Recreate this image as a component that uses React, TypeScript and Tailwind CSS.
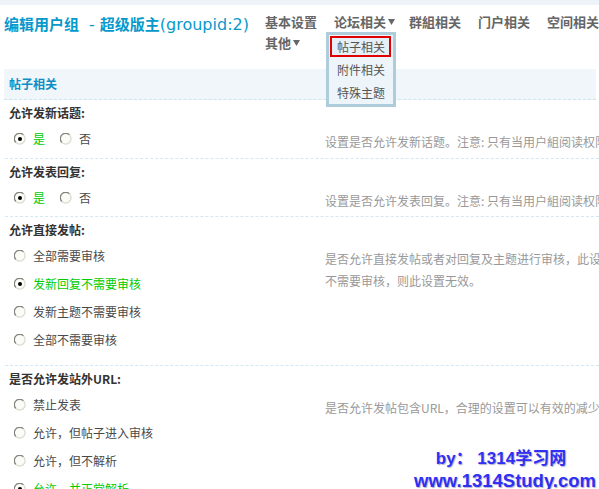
const font = "font-['Noto_Sans_CJK_SC','Noto_Sans',sans-serif]";

function Radio({ checked }: { checked?: boolean }) {
  return (
    <svg width="12" height="12" viewBox="0 0 12 12" className="shrink-0">
      <circle cx="6" cy="6" r="5.4" fill="#fbfbf7" />
      <path d="M1.9 9.5A5 5 0 0 1 9.5 1.9" stroke="#85827b" fill="none" strokeWidth="1.3" />
      <path d="M9.5 1.9A5 5 0 0 1 1.9 9.5" stroke="#dddad1" fill="none" strokeWidth="1.3" />
      {checked && <circle cx="6" cy="6" r="2" fill="#000" />}
    </svg>
  );
}

function Option({ label, checked }: { label: string; checked?: boolean }) {
  return (
    <div className="flex h-[28px] items-center">
      <Radio checked={checked} />
      <span className={checked ? "ml-[7px] text-[#00cc00]" : "ml-[7px] text-[#4a4a4a]"}>{label}</span>
    </div>
  );
}

function Caret() {
  return (
    <svg width="7" height="6" viewBox="0 0 7 6" className="ml-[2px] shrink-0">
      <path d="M0 0H7L3.5 6Z" fill="#666" />
    </svg>
  );
}

interface RowProps {
  title: string;
  pb: string;
  options: React.ReactNode;
  desc: React.ReactNode;
}

function Row({ title, pb, options, desc }: RowProps) {
  return (
    <div className={`ml-[5px] border-b border-dashed border-[#d3e8f6] pt-[3px] ${pb}`}>
      <div className="pl-[4px] text-[12px] font-bold leading-[20px] text-[#333]">{title}</div>
      <div className="mt-[2px] flex">
        <div className="w-[320px] shrink-0 pl-[9px] text-[12px]">{options}</div>
        <div className="whitespace-nowrap pt-[6px] text-[12px] leading-[22px] text-[#999]">{desc}</div>
      </div>
    </div>
  );
}

export default function App() {
  return (
    <div className={`relative h-[489px] w-[599px] overflow-hidden bg-white ${font}`}>
      <div className="h-[5px] bg-[#eef3f9]" />

      <div className="flex h-[64px]">
        <div className="flex w-[265px] shrink-0 items-baseline whitespace-nowrap pl-[4px] pt-[9px] text-[15px] font-bold leading-[20px] text-[#0899cc]">
          <span>编辑用户组</span>
          <span className="ml-[10px] mr-[5px] font-['DejaVu_Sans',sans-serif] font-normal text-[16px]">-</span>
          <span>超级版主</span>
          <span className="font-['DejaVu_Sans',sans-serif] font-normal text-[16px]">(groupid:2)</span>
        </div>
        <div className="relative pt-[6px] text-[13px] font-bold leading-[21px] text-[#666]">
          <div className="flex items-center whitespace-nowrap">
            <span>基本设置</span>
            <span className="ml-[17px]">论坛相关</span>
            <Caret />
            <span className="ml-[14px]">群組相关</span>
            <span className="ml-[17px]">门户相关</span>
            <span className="ml-[17px]">空间相关</span>
          </div>
          <div className="flex items-center">
            <span>其他</span>
            <Caret />
          </div>

          <div className="absolute left-[61px] top-[27px] z-10 h-[75px] w-[70px] border-[3px] border-[#aecdda] bg-[#eef5fa] text-[12px] font-normal text-[#555]">
            <div className="ml-[1px] mt-[1px] h-[21px] w-[61px] border-2 border-[#e00000] bg-[#e6eff6] pl-[5px] leading-[17px]">
              帖子相关
            </div>
            <div className="mt-[1px] h-[24px] pl-[8px] leading-[24px]">附件相关</div>
            <div className="h-[22px] pl-[8px] leading-[22px]">特殊主题</div>
          </div>
        </div>
      </div>

      <div className="ml-[4px] h-[31px] w-[592px] border-b border-dashed border-[#c9e4f5] bg-[#f1f6fb] pl-[5px] text-[12px] font-bold leading-[30px] text-[#0e8fc2]">
        帖子相关
      </div>

      <Row
        title="允许发新话题:"
        pb="pb-[5px]"
        options={
          <div className="flex">
            <Option label="是" checked />
            <div className="ml-[15px]">
              <Option label="否" />
            </div>
          </div>
        }
        desc="设置是否允许发新话题。注意: 只有当用户組阅读权限高于 0 时才能发新话题"
      />
      <Row
        title="允许发表回复:"
        pb="pb-[4px]"
        options={
          <div className="flex">
            <Option label="是" checked />
            <div className="ml-[15px]">
              <Option label="否" />
            </div>
          </div>
        }
        desc="设置是否允许发表回复。注意: 只有当用户組阅读权限高于 0 时才能发表回复"
      />
      <Row
        title="允许直接发帖:"
        pb="pb-[11px]"
        options={
          <>
            <Option label="全部需要审核" />
            <Option label="发新回复不需要审核" checked />
            <Option label="发新主题不需要审核" />
            <Option label="全部不需要审核" />
          </>
        }
        desc={
          <>
            <div>是否允许直接发帖或者对回复及主题进行审核，此设置只对需要审核的版块有效，如果版块</div>
            <div>不需要审核，则此设置无效。</div>
          </>
        }
      />
      <Row
        title="是否允许发站外URL:"
        pb="pb-[4px]"
        options={
          <>
            <Option label="禁止发表" />
            <Option label="允许，但帖子进入审核" />
            <Option label="允许，但不解析" />
            <Option label="允许，并正常解析" checked />
          </>
        }
        desc="是否允许发帖包含URL，合理的设置可以有效的减少广告的发布"
      />

      <div className="absolute bottom-[-3px] right-[3px] text-center font-['Liberation_Sans','Noto_Sans_CJK_SC',sans-serif] font-bold text-[#3030f4] [text-shadow:1px_1px_1px_#b4b4cc]">
        <div className="pr-[8px] text-[17px] leading-[22px]">by： 1314学习网</div>
        <div className="text-[18.5px] leading-[22px]">www.1314Study.com</div>
      </div>
    </div>
  );
}
